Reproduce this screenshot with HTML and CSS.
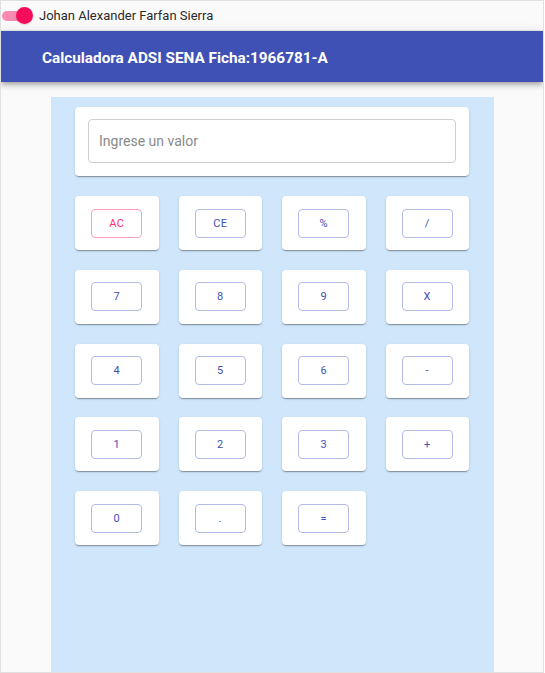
FILE: index.html
```html
<!DOCTYPE html>
<html lang="es">
<head>
<meta charset="utf-8">
<title>Calculadora</title>
<link rel="stylesheet" href="styles.css">
</head>
<body>
<div class="frame">
  <div class="topbar">
    <span class="toggle"><span class="track"></span><span class="thumb"></span></span>
    <span class="name">Johan Alexander Farfan Sierra</span>
  </div>
  <header class="header">Calculadora ADSI SENA Ficha:1966781-A</header>
  <main class="calc">
    <div class="card input-card">
      <input class="display" type="text" placeholder="Ingrese un valor">
    </div>
    <div class="keys">
      <div class="card key"><button class="btn accent">AC</button></div>
      <div class="card key"><button class="btn">CE</button></div>
      <div class="card key"><button class="btn">%</button></div>
      <div class="card key"><button class="btn">/</button></div>
      <div class="card key"><button class="btn">7</button></div>
      <div class="card key"><button class="btn">8</button></div>
      <div class="card key"><button class="btn">9</button></div>
      <div class="card key"><button class="btn">X</button></div>
      <div class="card key"><button class="btn">4</button></div>
      <div class="card key"><button class="btn">5</button></div>
      <div class="card key"><button class="btn">6</button></div>
      <div class="card key"><button class="btn">-</button></div>
      <div class="card key"><button class="btn">1</button></div>
      <div class="card key"><button class="btn">2</button></div>
      <div class="card key"><button class="btn">3</button></div>
      <div class="card key"><button class="btn">+</button></div>
      <div class="card key"><button class="btn">0</button></div>
      <div class="card key"><button class="btn">.</button></div>
      <div class="card key"><button class="btn">=</button></div>
    </div>
  </main>
</div>
</body>
</html>
```
FILE: styles.css
```css
* { box-sizing: border-box; }
html, body { margin: 0; padding: 0; background: #ffffff; }
body { font-family: Roboto, "Liberation Sans", sans-serif; }

.frame {
  width: 544px;
  height: 673px;
  border: 1px solid #e0e0e0;
  background: #fafafa;
  display: flex;
  flex-direction: column;
  overflow: hidden;
}

.topbar {
  height: 30px;
  flex: none;
  display: flex;
  align-items: center;
  border-bottom: 1px solid #ececec;
  padding-left: 1px;
}
.toggle {
  position: relative;
  width: 32px;
  height: 18px;
  flex: none;
}
.track {
  position: absolute;
  left: 0;
  top: 4px;
  width: 27px;
  height: 10px;
  border-radius: 5px;
  background: #fb8ab2;
}
.thumb {
  position: absolute;
  left: 14px;
  top: 0;
  width: 17px;
  height: 17px;
  border-radius: 50%;
  background: #f50d5c;
  box-shadow: 0 1px 2px rgba(0,0,0,.15);
}
.name {
  margin-left: 5px;
  font-size: 13px;
  color: #2a2a2a;
}

.header {
  height: 51px;
  flex: none;
  background: #3f51b5;
  color: #fff;
  font-weight: 700;
  font-size: 15.3px;
  display: flex;
  align-items: center;
  padding-left: 41px;
  padding-top: 2px;
  box-shadow: 0 2px 4px -1px rgba(0,0,0,.2), 0 4px 5px 0 rgba(0,0,0,.14), 0 1px 10px 0 rgba(0,0,0,.12);
  position: relative;
  z-index: 1;
}

.calc {
  margin-top: 15px;
  margin-left: 50px;
  width: 443px;
  flex: 1;
  background: #d0e7fb;
  padding: 10px 25px 0 24px;
}

.card {
  background: #fff;
  border-radius: 4px;
  box-shadow: 0 2px 1px -1px rgba(0,0,0,.2), 0 1px 1px 0 rgba(0,0,0,.14), 0 1px 3px 0 rgba(0,0,0,.12);
}

.input-card {
  height: 69px;
  padding: 12px 13px;
}
.display {
  display: block;
  width: 100%;
  height: 44px;
  border: 1px solid #cfcfcf;
  border-radius: 4px;
  padding: 0 10px;
  font-family: Roboto, "Liberation Sans", sans-serif;
  font-size: 14px;
  color: #333;
  background: #fff;
  outline: none;
}
.display::placeholder { color: #8a8a8a; }

.keys {
  margin-top: 20px;
  display: grid;
  grid-template-columns: repeat(4, 1fr);
  column-gap: 20px;
  row-gap: 19.75px;
}
.key {
  height: 54px;
  display: flex;
  align-items: center;
  justify-content: center;
}
.btn {
  width: 51px;
  height: 29px;
  border: 1px solid #b4bae6;
  border-radius: 4px;
  background: #fff;
  color: #3f51b5;
  font-family: Roboto, "Liberation Sans", sans-serif;
  font-weight: 400;
  font-size: 11px;
  letter-spacing: .4px;
  padding: 0;
  cursor: pointer;
}
.btn.accent {
  border-color: #ff9cbd;
  color: #ff2d74;
}
```
